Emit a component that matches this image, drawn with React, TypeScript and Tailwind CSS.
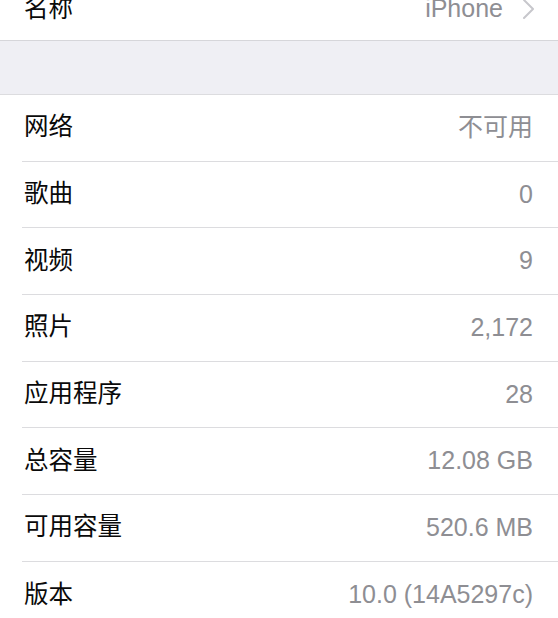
const ROWS: [string, string][] = [
  ["网络", "不可用"],
  ["歌曲", "0"],
  ["视频", "9"],
  ["照片", "2,172"],
  ["应用程序", "28"],
  ["总容量", "12.08 GB"],
  ["可用容量", "520.6 MB"],
  ["版本", "10.0 (14A5297c)"],
];

const font = { fontFamily: '"Liberation Sans", "Noto Sans CJK SC", sans-serif' };

function Row({ label, value, last }: { label: string; value: string; last?: boolean }) {
  return (
    <div className="bg-white pl-[22px]">
      <div
        className={[
          "flex h-[66.67px] items-center justify-between pl-[2px] pr-[25px]",
          last ? "" : "border-b border-[#dcdcdf]",
        ].join(" ")}
      >
        <span className="text-[24.5px] text-[#0a0a0a]">{label}</span>
        <span className="text-[25px] text-[#8e8e93]">{value}</span>
      </div>
    </div>
  );
}

export default function App() {
  return (
    <div className="h-[618px] w-[558px] overflow-hidden bg-white" style={font}>
      <div className="mt-[-22px] flex h-[63px] items-center justify-between border-b border-[#d6d6da] pl-[24px] pr-[23px]">
        <span className="text-[24.5px] text-[#0a0a0a]">名称</span>
        <span className="flex items-center gap-[19px] text-[25px] text-[#8e8e93]">
          iPhone
          <svg width="13" height="22" viewBox="0 0 13 22" fill="none">
            <path d="M2 2l9 9-9 9" stroke="#c7c7cc" strokeWidth="2" strokeLinecap="round" strokeLinejoin="round" />
          </svg>
        </span>
      </div>
      <div className="h-[54px] border-b border-[#dcdcdf] bg-[#efeff4]" />
      {ROWS.map(([l, v], i) => (
        <Row key={l} label={l} value={v} last={i === ROWS.length - 1} />
      ))}
    </div>
  );
}
